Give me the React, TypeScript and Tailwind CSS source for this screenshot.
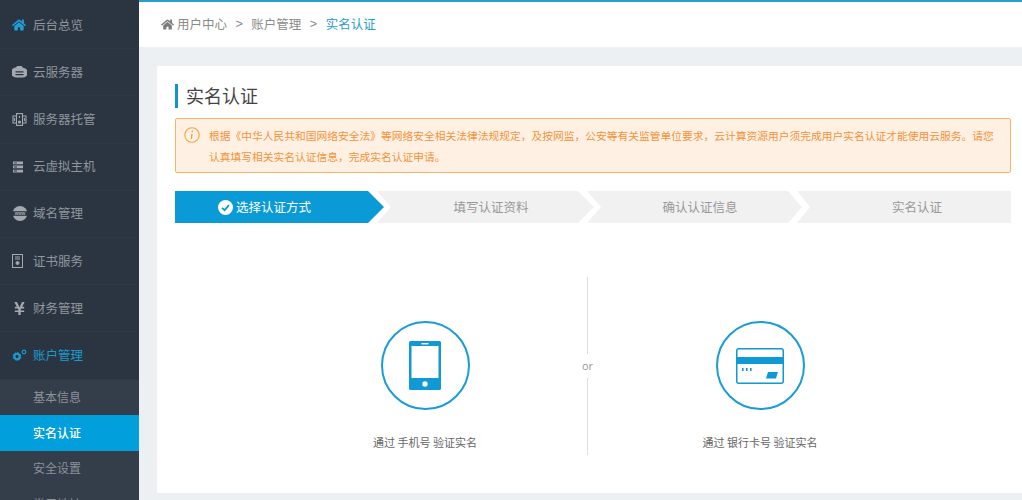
import { FaHome, FaYenSign } from 'react-icons/fa';
import type { ReactNode } from 'react';

const CloudIcon = () => (
  <svg width="15" height="12" viewBox="0 0 15 12" fill="currentColor">
    <path fillRule="evenodd" d="M4 1.5 A4 4 0 0 1 11 1.7 A4.6 4.6 0 0 1 10.6 11.5 H4 A4.6 4.6 0 0 1 4 1.5Z M3.5 5.2 V6.4 H11.5 V5.2Z M3.5 8 V9.2 H11.5 V8Z" />
  </svg>
);

const HostingIcon = () => (
  <svg width="15" height="13" viewBox="0 0 15 13" fill="none" stroke="currentColor" strokeWidth="1.1">
    <rect x="4.5" y="0.6" width="6" height="11.8" />
    <path d="M4.5 3 H1 V10 H4.5 M10.5 3 H14 V10 H10.5 M2.6 5 V8 M12.4 5 V8 M7.5 3 V5" />
    <circle cx="7.5" cy="9" r="1" fill="currentColor" />
  </svg>
);

const VpsIcon = () => (
  <svg width="12" height="12" viewBox="0 0 12 12" fill="currentColor">
    <path fillRule="evenodd" d="M1 0.5 H11 V3.2 H1Z M2 1.4 V2.3 H5 V1.4Z M1 4.6 H11 V7.3 H1Z M2 5.5 V6.4 H5 V5.5Z M1 8.7 H11 V11.4 H1Z M2 9.6 V10.5 H5 V9.6Z" />
  </svg>
);

const WwwIcon = () => (
  <svg width="16" height="15" viewBox="0 0 16 15">
    <circle cx="8" cy="7.5" r="7.5" fill="currentColor" />
    <rect x="0" y="5.2" width="16" height="4.6" fill="#2b3541" />
    <text x="8" y="9.2" textAnchor="middle" fontSize="4.6" fontWeight="700" fill="currentColor" fontFamily="Liberation Sans, sans-serif">
      www
    </text>
  </svg>
);

const CertIcon = () => (
  <svg width="11" height="14" viewBox="0 0 11 14" fill="none" stroke="currentColor" strokeWidth="1">
    <rect x="0.5" y="0.5" width="10" height="13" />
    <path d="M3 3 H8 M3 5 H8" />
    <circle cx="5.5" cy="9" r="1.5" fill="currentColor" />
  </svg>
);

const GearsIcon = () => (
  <svg width="15" height="13" viewBox="0 0 15 13" fill="none" stroke="currentColor">
    <circle cx="5" cy="7.5" r="3" strokeWidth="2.4" strokeDasharray="1.8 0.5" />
    <circle cx="5" cy="7.5" r="2.6" strokeWidth="1.8" />
    <circle cx="12" cy="3" r="1.8" strokeWidth="1.2" />
  </svg>
);

const menu: { label: string; icon: ReactNode; active?: boolean }[] = [
  { label: '后台总览', icon: <FaHome className="text-[14px] text-[#1f9ed8]" /> },
  { label: '云服务器', icon: <CloudIcon /> },
  { label: '服务器托管', icon: <HostingIcon /> },
  { label: '云虚拟主机', icon: <VpsIcon /> },
  { label: '域名管理', icon: <WwwIcon /> },
  { label: '证书服务', icon: <CertIcon /> },
  { label: '财务管理', icon: <FaYenSign className="text-[15px]" /> },
  { label: '账户管理', icon: <GearsIcon />, active: true },
];

const subMenu = ['基本信息', '实名认证', '安全设置', '常用地址'];

function Sidebar() {
  return (
    <aside className="w-[139px] shrink-0 bg-[#2b3541] overflow-hidden">
      <div className="pt-[2px]">
        {menu.map((item) => (
          <div
            key={item.label}
            className={`h-[47.2px] flex items-center border-b border-[#2f3945] text-[12.5px] ${
              item.active ? 'text-[#1a9ad0]' : 'text-[#8f969e]'
            }`}
          >
            <span className={`w-[33px] pl-[12px] flex items-center ${item.active ? 'text-[#1a9ad0]' : 'text-[#a3a9af]'}`}>
              {item.icon}
            </span>
            <span>{item.label}</span>
          </div>
        ))}
      </div>
      <div className="bg-[#343e4b]">
        {subMenu.map((label) => (
          <div
            key={label}
            className={`h-[35.5px] pl-[33px] flex items-center text-[12px] ${
              label === '实名认证' ? 'bg-[#019fdb] text-white font-medium' : 'text-[#8b929a]'
            }`}
          >
            {label}
          </div>
        ))}
      </div>
    </aside>
  );
}

function Breadcrumb() {
  return (
    <div className="h-[45px] shrink-0 bg-white flex items-center pl-[22px] text-[12.5px] text-[#8a8a8a]">
      <FaHome className="text-[13px] text-[#7d7d7d] mr-[3px]" />
      <span>用户中心</span>
      <span className="mx-[8.5px] font-['Liberation_Sans',sans-serif] text-[#888]">&gt;</span>
      <span>账户管理</span>
      <span className="mx-[8.5px] font-['Liberation_Sans',sans-serif] text-[#888]">&gt;</span>
      <span className="text-[#2a9cc9]">实名认证</span>
    </div>
  );
}

const PhoneIcon = () => (
  <svg width="32" height="49" viewBox="0 0 32 49">
    <path
      fillRule="evenodd"
      fill="#0f9ad6"
      d="M1.5 0 H30.5 A1.5 1.5 0 0 1 32 1.5 V47.5 A1.5 1.5 0 0 1 30.5 49 H1.5 A1.5 1.5 0 0 1 0 47.5 V1.5 A1.5 1.5 0 0 1 1.5 0Z M2.5 5 V37 H29.5 V5Z"
    />
    <rect x="12.5" y="2" width="7" height="1.4" fill="#fff" />
    <circle cx="16" cy="43" r="2.7" fill="#fff" />
  </svg>
);

const CardIcon = () => (
  <svg width="48" height="36" viewBox="0 0 48 36">
    <rect x="0.75" y="0.75" width="46.5" height="34.5" rx="2" fill="#fff" stroke="#0f9ad6" strokeWidth="1.5" />
    <rect x="1" y="9" width="46" height="7" fill="#0f9ad6" />
    <path d="M6 20 h1.6 v3 h-1.6Z M10 20 h1.6 v3 h-1.6Z M14 20 h1.6 v3 h-1.6Z" fill="#0f9ad6" />
    <path d="M32 24 H42 L40 30.5 H30Z" fill="#0f9ad6" />
  </svg>
);

function Method({ icon, label }: { icon: ReactNode; label: string }) {
  return (
    <div className="w-[200px] flex flex-col items-center pt-[44px]">
      <div className="w-[89px] h-[89px] rounded-full border-2 border-[#1a9cd6] flex items-center justify-center">
        {icon}
      </div>
      <p className="mt-[24px] text-[11px] leading-[16px] text-[#666]">{label}</p>
    </div>
  );
}

const steps = [
  {
    label: '选择认证方式',
    className: 'w-[209px] bg-[#0a9ad6] text-white [clip-path:polygon(0_0,193px_0,100%_50%,193px_100%,0_100%)] pr-[30px]',
  },
  {
    label: '填写认证资料',
    className: 'w-[217px] ml-[-7px] bg-[#f1f1f1] text-[#999] pl-[11px] [clip-path:polygon(0_0,201px_0,100%_50%,201px_100%,0_100%,14px_50%)]',
  },
  {
    label: '确认认证信息',
    className: 'w-[215px] ml-[-7px] bg-[#f1f1f1] text-[#999] pl-[11px] [clip-path:polygon(0_0,201px_0,100%_50%,201px_100%,0_100%,14px_50%)]',
  },
  {
    label: '实名认证',
    className: 'w-[214px] ml-[-5px] bg-[#f1f1f1] text-[#999] pl-[26px] [clip-path:polygon(0_0,100%_0,100%_100%,0_100%,13px_50%)]',
  },
];

function Steps() {
  return (
    <div className="mt-[18px] flex h-[32px]">
      {steps.map((step, i) => (
        <div key={step.label} className={`h-full flex items-center justify-center pt-[1px] text-[12.5px] ${step.className}`}>
          {i === 0 && (
            <svg width="15" height="15" viewBox="0 0 15 15" className="mr-[3px]">
              <circle cx="7.5" cy="7.5" r="7.5" fill="#fff" />
              <path d="M4 7.8 L6.6 10.2 L11 5.2" fill="none" stroke="#0a9ad6" strokeWidth="1.8" />
            </svg>
          )}
          {step.label}
        </div>
      ))}
    </div>
  );
}

export default function App() {
  return (
    <div className="flex h-[500px] w-[1022px] overflow-hidden font-['Microsoft_YaHei','Noto_Sans_CJK_SC',sans-serif]">
      <Sidebar />
      <main className="flex-1 flex flex-col bg-[#edf0f3] overflow-hidden border-t-2 border-[#2a9dc9]">
        <Breadcrumb />
        <section className="mt-[19px] ml-[18px] h-[427px] bg-white pt-[18px] pl-[18px] pr-[11px]">
          <h1 className="h-[24px] border-l-[3px] border-[#0f94cc] pl-[8px] text-[18px] leading-[22px] text-[#444]">
            实名认证
          </h1>

          <div className="mt-[10px] h-[55px] rounded-[2px] border border-[#fbb268] bg-[#fef1e4] flex pl-[8px] pt-[6px] text-[10.75px] leading-[21px] text-[#f5923a]">
            <svg width="16" height="16" viewBox="0 0 16 16" className="shrink-0 mt-[2px]">
              <circle cx="8" cy="8" r="7.2" fill="none" stroke="#f5a33f" strokeWidth="1.1" />
              <path d="M8.3 3.6 v1.6 M8 6.8 L7.4 12" stroke="#f5a33f" strokeWidth="1.4" fill="none" />
            </svg>
            <p className="ml-[9px] w-[785px]">
              根据《中华人民共和国网络安全法》等网络安全相关法律法规规定，及按网监，公安等有关监管单位要求，云计算资源用户须完成用户实名认证才能使用云服务。请您认真填写相关实名认证信息，完成实名认证申请。
            </p>
          </div>

          <Steps />

          <div className="mt-[54px] h-[178px] flex">
            <div className="ml-[150px]">
              <Method icon={<PhoneIcon />} label="通过 手机号 验证实名" />
            </div>
            <div className="relative ml-[62px] w-px bg-[#dedede]">
              <span className="absolute left-1/2 top-[77px] -translate-x-1/2 bg-white py-[4px] px-[2px] font-['Open_Sans',sans-serif] text-[11px] leading-[16px] text-[#999]">
                or
              </span>
            </div>
            <div className="ml-[72px]">
              <Method icon={<CardIcon />} label="通过 银行卡号 验证实名" />
            </div>
          </div>
        </section>
      </main>
    </div>
  );
}
